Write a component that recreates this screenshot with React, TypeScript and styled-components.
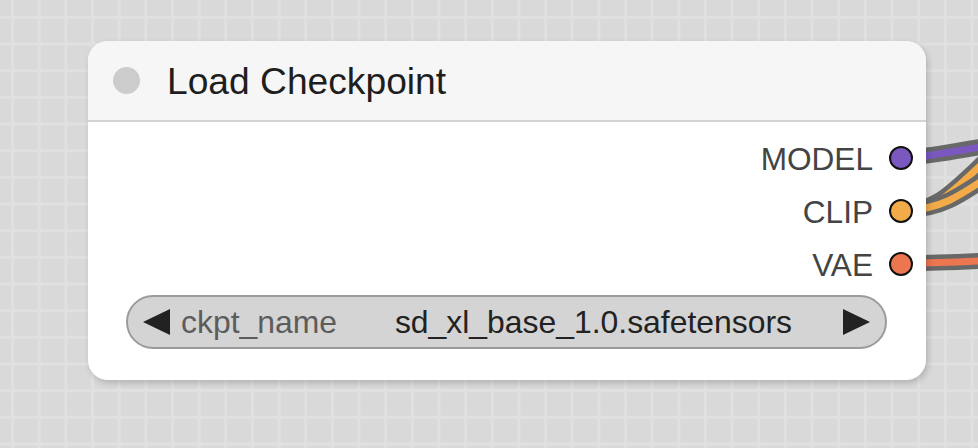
import React from "react";
import styled, { createGlobalStyle } from "styled-components";

const Global = createGlobalStyle`
  html, body { margin: 0; padding: 0; }
  body { font-family: "Liberation Sans", Arial, sans-serif; background: #d9d9d9; }
`;

const Canvas = styled.div`
  position: relative;
  width: 978px;
  height: 448px;
  overflow: hidden;
  background-color: #d9d9d9;
  background-image:
    linear-gradient(to right, #e0e0e0 0, #e0e0e0 2.5px, transparent 2.5px),
    linear-gradient(to bottom, #e0e0e0 0, #e0e0e0 2.5px, transparent 2.5px);
  background-size: 26.67px 26.67px;
  background-position: 11px 16px;
`;

const Links = styled.svg`
  position: absolute;
  left: 0;
  top: 0;
  width: 978px;
  height: 448px;
`;

const Node = styled.div<{ $x: number; $y: number; $w: number }>`
  position: absolute;
  left: ${(p) => p.$x}px;
  top: ${(p) => p.$y}px;
  width: ${(p) => p.$w}px;
  background: #ffffff;
  border-radius: 20px;
  box-shadow: 2px 3px 6px rgba(0, 0, 0, 0.18);
  display: flex;
  flex-direction: column;
  overflow: hidden;
`;

const TitleBar = styled.div`
  height: 79px;
  background: #f6f6f6;
  border-bottom: 2.5px solid #d2d2d2;
  display: flex;
  align-items: center;
  gap: 27px;
  padding-left: 25px;
`;

const TitleDot = styled.span`
  width: 27px;
  height: 27px;
  border-radius: 50%;
  background: #cccccc;
  flex: none;
`;

const Title = styled.span`
  font-size: 37.2px;
  color: #1e1e1e;
  padding-top: 1px;
`;

const Body = styled.div`
  display: flex;
  flex-direction: column;
  padding: 9px 0 31px;
`;

const OutputRow = styled.div`
  height: 53px;
  display: flex;
  justify-content: flex-end;
  align-items: center;
  gap: 16px;
  padding-right: 13px;
`;

const SlotLabel = styled.span`
  font-size: 31.6px;
  color: #444444;
  padding-top: 4px;
`;

const SlotDot = styled.span<{ $color: string }>`
  box-sizing: border-box;
  width: 24px;
  height: 24px;
  border-radius: 50%;
  border: 2.5px solid #111111;
  background: ${(p) => p.$color};
  flex: none;
`;

const Combo = styled.div`
  box-sizing: border-box;
  margin: 5px 39px 0 38px;
  height: 54px;
  border-radius: 27px;
  border: 2px solid #9b9b9b;
  background: #d4d4d4;
  display: flex;
  align-items: center;
  padding: 0 15px;
  font-size: 31.9px;
`;

const Arrow = styled.svg`
  width: 27px;
  height: 26px;
  flex: none;
`;

const ComboLabel = styled.span`
  color: #5c5c5c;
  margin-left: 11px;
`;

const ComboValue = styled.span`
  color: #222222;
  margin-left: auto;
  margin-right: 51px;
`;

const LeftArrow = () => (
  <Arrow viewBox="0 0 27 26">
    <polygon points="0,13 27,0 27,26" fill="#222" />
  </Arrow>
);

const RightArrow = () => (
  <Arrow viewBox="0 0 27 26">
    <polygon points="27,13 0,0 0,26" fill="#222" />
  </Arrow>
);

type Wire = { d: string; color: string };

const wires: Wire[] = [
  { d: "M 905 157 C 935 157, 955 150, 995 145", color: "#7a58c0" },
  { d: "M 905 210 C 940 210, 955 188, 995 152", color: "#f2ab48" },
  { d: "M 905 210 C 940 210, 960 196, 995 172", color: "#f2ab48" },
  { d: "M 905 263 C 940 263, 960 262, 995 260", color: "#ec7650" },
];

const outputs = [
  { name: "MODEL", color: "#7a58c0" },
  { name: "CLIP", color: "#f2ab48" },
  { name: "VAE", color: "#ec7650" },
];

export default function App() {
  return (
    <>
      <Global />
      <Canvas>
        <Links viewBox="0 0 978 448">
          {wires.map((w, i) => (
            <g key={i} fill="none" strokeLinecap="round">
              <path d={w.d} stroke="#686868" strokeWidth={16} />
              <path d={w.d} stroke={w.color} strokeWidth={7} />
            </g>
          ))}
        </Links>
        <Node $x={88} $y={41} $w={838}>
          <TitleBar>
            <TitleDot />
            <Title>Load Checkpoint</Title>
          </TitleBar>
          <Body>
            {outputs.map((o) => (
              <OutputRow key={o.name}>
                <SlotLabel>{o.name}</SlotLabel>
                <SlotDot $color={o.color} />
              </OutputRow>
            ))}
            <Combo>
              <LeftArrow />
              <ComboLabel>ckpt_name</ComboLabel>
              <ComboValue>sd_xl_base_1.0.safetensors</ComboValue>
              <RightArrow />
            </Combo>
          </Body>
        </Node>
      </Canvas>
    </>
  );
}
